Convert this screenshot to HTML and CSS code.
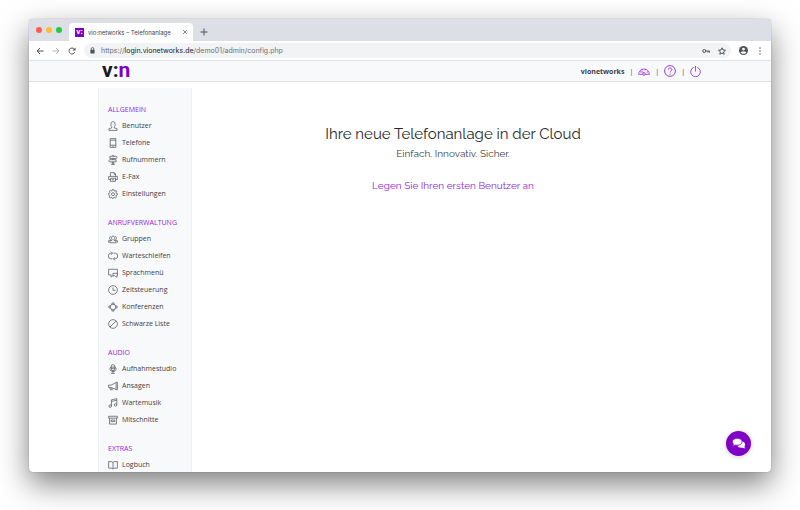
FILE: index.html
```html
<!DOCTYPE html>
<html lang="de">

<head>
    <meta charset="UTF-8">
    <meta name="viewport" content="width=device-width, initial-scale=1.0">
    <title>vio:networks – Telefonanlage</title>
    <link rel="stylesheet" href="styles.css">
</head>
<body>

    <div class="window">
        <div class="tabbar">
            <div class="lights">
                <span class="light red"></span>
                <span class="light yellow"></span>
                <span class="light green"></span>
            </div>
            <div class="tab">
                <span class="favicon">v:</span>
                <span class="tab-title">vio:networks – Telefonanlage</span>
                <button class="icon-btn" aria-label="Tab schließen">
                    <svg class="icon-small" viewBox="0 0 16 16"><path d="M3 3l10 10M13 3L3 13" /></svg>
                </button>
            </div>
            <button class="icon-btn new-tab" aria-label="Neuer Tab">
                <svg class="icon-mid" viewBox="0 0 16 16"><path d="M8 1v14M1 8h14" /></svg>
            </button>
        </div>

        <div class="toolbar">
            <button class="icon-btn" aria-label="Zurück">
                <svg class="icon-mid" viewBox="0 0 16 16"><path d="M15 8H2M8 2L2 8l6 6" /></svg>
            </button>
            <button class="icon-btn light-btn" aria-label="Vor">
                <svg class="icon-mid" viewBox="0 0 16 16"><path d="M1 8h13M8 2l6 6-6 6" /></svg>
            </button>
            <button class="icon-btn" aria-label="Neu laden">
                <svg class="icon-mid" viewBox="0 0 16 16"><path d="M13.500 10.500A6 6 0 1 1 12.500 4L14 6" /><path class="solid" d="M15 1v6H9z" /></svg>
            </button>
            <div class="address">
                <svg class="icon-lock" viewBox="0 0 12 16"><path class="solid" d="M1 6h10v9H1z" /><path d="M3 7V4a3 3 0 0 1 6 0v3" /></svg>
                <span class="url">https://<b>login.vionetworks.de</b>/demo01/admin/config.php</span>
                <button class="icon-btn" aria-label="Passwort">
                    <svg class="icon-mid" viewBox="0 0 16 16"><circle cx="4.500" cy="8" r="3" /><path d="M7 8h8v3M12 8v3" /></svg>
                </button>
                <button class="icon-btn" aria-label="Lesezeichen">
                    <svg class="icon-mid" viewBox="0 0 16 16"><path d="M8 1.500l2 4.500 5 .5-3.800 3.200L12.300 14.500 8 12l-4.300 2.500 1.100-4.800L1 6.500 6 6z" /></svg>
                </button>
            </div>
            <button class="icon-btn" aria-label="Profil">
                <svg class="icon-user" viewBox="0 0 16 16"><circle class="solid" cx="8" cy="8" r="8" /><circle class="cut" cx="8" cy="5.500" r="2.500" /><path class="cut" d="M3 11.500c1-2.500 9-2.500 10 0-2 3-8 3-10 0z" /></svg>
            </button>
            <button class="icon-btn" aria-label="Menü">
                <svg class="icon-mid" viewBox="0 0 16 16"><circle class="solid" cx="8" cy="2" r="1.500" /><circle class="solid" cx="8" cy="8" r="1.500" /><circle class="solid" cx="8" cy="14" r="1.500" /></svg>
            </button>
        </div>

        <header class="header">
            <a href="#" class="logo">v:<span>n</span></a>
            <nav class="user-nav">
                <b>vionetworks</b>
                <span class="sep">|</span>
                <a href="#" aria-label="Dashboard"><svg class="icon-head" viewBox="0 0 18 16"><path d="M1 13a8 8 0 0 1 16 0h-5.500M6.500 13H1M3 9l2 1M6 5l1 2M12 5l-1 2M15 9l-2 1M5 8l3.500 3" /><circle cx="9" cy="12.500" r="2" /></svg></a>
                <span class="sep">|</span>
                <a href="#" aria-label="Hilfe"><svg class="icon-head" viewBox="0 0 16 16"><circle cx="8" cy="8" r="7.200" /><path d="M5.700 6.200c0-3 4.700-3 4.700 0C10.400 8 8 8 8 10M8 11.500V13" /></svg></a>
                <span class="sep">|</span>
                <a href="#" aria-label="Abmelden"><svg class="icon-power" viewBox="0 0 16 16"><path d="M5.500 2a7 7 0 1 0 5 0M8 0v8" /></svg></a>
            </nav>
        </header>

        <div class="page">
            <nav class="sidebar">
                <h2>Allgemein</h2>
                <ul>
                    <li><a href="#"><svg class="icon" viewBox="0 0 16 16"><path d="M6 9.500C4 8 4 1 8 1s4 7 2 8.500V11l4.500 1.500V15h-13v-2.500L6 11z" /></svg>Benutzer</a></li>
                    <li><a href="#"><svg class="icon" viewBox="0 0 16 16"><path d="M3.500 1h9v14h-9zM3.500 3.500h9M3.500 11.500h9M7 13.300h2" /></svg>Telefone</a></li>
                    <li><a href="#"><svg class="icon" viewBox="0 0 16 16"><path d="M3 2h10l2 1.700-2 1.800H3zM13 7.500H3L1 9.200 3 11h10zM7 5.500v2M9 5.500v2M7 11v4M9 11v4M5 15h6M7 2V1h2v1" /></svg>Rufnummern</a></li>
                    <li><a href="#"><svg class="icon" viewBox="0 0 16 16"><path d="M4 7V1h6l2 2v4M4 12H1V7h14v5h-3M4 10h8v5H4zM6 12.500h4M10 1v2.500h2M12 8.500h1" /></svg>E-Fax</a></li>
                    <li><a href="#"><svg class="icon" viewBox="0 0 16 16"><path d="M6.700 1h2.600l.5 2 1.400.6L13 2.500 14 4.600 12.700 6l.5 1.200 1.800.3v2l-2 .5-.6 1.200 1.100 1.800-1.800 1.300-1.800-1-1 .4-.6 1.800H7l-.6-1.800-1.200-.4-1.900 1-1.500-1.500 1.100-1.800L2.400 10l-1.800-.7V7.200l1.900-.4L3 5.600 2 3.800l1.700-1.400 1.700 1L6.300 3z" /><circle cx="8" cy="8.300" r="2.400" /></svg>Einstellungen</a></li>
                </ul>
                <h2>Anrufverwaltung</h2>
                <ul>
                    <li><a href="#"><svg class="icon" viewBox="0 0 16 16"><path d="M6.500 9C5 7 5.500 3 8 3s3 4 1.500 6v1l3.500 1.500V14H3v-2.500L6.500 10zM4.500 10C3 10 1 10.500.5 11v2H2M4.500 4C2 4 2 7 3.500 8.500V10M11.500 10c1.500 0 3.500.5 4 1v2H14M11.500 4C14 4 14 7 12.500 8.500V10" /></svg>Gruppen</a></li>
                    <li><a href="#"><svg class="icon" viewBox="0 0 16 16"><path d="M6.500 3.500H4.500a4 4.500 0 0 0 0 9H7M9.500 12.500h2a4 4.500 0 0 0 0-9H9M5 1l2.500 2.500L5 6M11 10l-2.500 2.500L11 15" /></svg>Warteschleifen</a></li>
                    <li><a href="#"><svg class="icon" viewBox="0 0 16 16"><path d="M5 11H1V2h14v8M5 11v3.500L8 12M8 8.500h7v4h-1V15l-3-2.500H8z" /></svg>Sprachmenü</a></li>
                    <li><a href="#"><svg class="icon" viewBox="0 0 16 16"><circle cx="8" cy="8" r="7" /><path d="M8 4v4.500h4" /></svg>Zeitsteuerung</a></li>
                    <li><a href="#"><svg class="icon" viewBox="0 0 16 16"><circle cx="8" cy="8" r="4.500" /><path d="M6 4l.5-2.500h3L10 4M6 12l.5 2.500h3L10 12M4 6l-2.500.5v3L4 10M12 6l2.500.5v3L12 10" /></svg>Konferenzen</a></li>
                    <li><a href="#"><svg class="icon" viewBox="0 0 16 16"><circle cx="8" cy="8" r="7" /><path d="M13 3L3 13" /></svg>Schwarze Liste</a></li>
                </ul>
                <h2>Audio</h2>
                <ul>
                    <li><a href="#"><svg class="icon" viewBox="0 0 16 16"><path d="M5 4a3 3 0 0 1 6 0v4a3 3 0 0 1-6 0zM5 5h6M5 7h6M5 5C2 6 2 12 8 12s6-6 3-7M8 9v6M5 15h6" /></svg>Aufnahmestudio</a></li>
                    <li><a href="#"><svg class="icon" viewBox="0 0 16 16"><path d="M1 6.500h4l8-4v11l-8-3H1zM13 2h2v12h-2M3 10.500L4 14h3l-1-3" /></svg>Ansagen</a></li>
                    <li><a href="#"><svg class="icon" viewBox="0 0 16 16"><path d="M5.500 13V3L14 1v10M5.500 5.500L14 3.500" /><circle cx="3.500" cy="13" r="2" /><circle cx="12" cy="11" r="2" /></svg>Wartemusik</a></li>
                    <li><a href="#"><svg class="icon" viewBox="0 0 16 16"><path d="M1 2h14v3H1zM2.500 5v9.500h11V5M5 8h6v2.500H5z" /></svg>Mitschnitte</a></li>
                </ul>
                <h2>Extras</h2>
                <ul>
                    <li><a href="#"><svg class="icon" viewBox="0 0 16 16"><path d="M8 4C6 2 4 2.500 1 2.500V13c3 0 5-.5 7 1.500 2-2 4-1.500 7-1.500V2.500C12 2.500 10 2 8 4zM8 4v10" /></svg>Logbuch</a></li>
                </ul>
            </nav>

            <main class="content">
                <h1>Ihre neue Telefonanlage in der Cloud</h1>
                <p>Einfach. Innovativ. Sicher.</p>
                <a href="#" class="first-user">Legen Sie Ihren ersten Benutzer an</a>
            </main>
        </div>

        <button class="chat" aria-label="Chat">
            <svg viewBox="0 0 20 16"><path d="M14 5c3 0 5 2 5 4.500 0 1.200-.5 2.200-1.200 3 .2 1 .7 1.700 1.200 2.500-1.500 0-2.700-.5-3.500-1-4 .8-7-.5-8-3C12 11 14.500 8 14 5z" /><path class="front" d="M7.500.5c4 0 7 2.200 7 5s-3 5-7 5c-1 0-2-.1-2.800-.4C3.500 11 2 11.500.5 11.500c.7-.8 1.200-1.600 1.400-2.500C1 8 .5 6.800.5 5.500c0-2.800 3-5 7-5z" /></svg>
        </button>
    </div>

</body>

</html>
```
FILE: styles.css
```css
* {
    box-sizing: border-box;
}

body {
    margin: 0;
    height: 100vh;
    padding: 19px 29px 38px;
    background-color: #fff;
    font-family: "Open Sans", sans-serif;
    font-size: 7px;
    color: #3c3f45;
    overflow: hidden;
}

h1, h2, p, ul {
    margin: 0;
    padding: 0;
    font-weight: normal;
}

ul {
    list-style: none;
}

a {
    color: inherit;
    text-decoration: none;
}

svg {
    display: block;
    fill: none;
    stroke: currentColor;
    stroke-width: 1.2;
}

.solid {
    fill: currentColor;
    stroke: none;
}

.cut {
    fill: #fff;
    stroke: none;
}

.window {
    position: relative;
    display: flex;
    flex-direction: column;
    height: 100%;
    border-radius: 4px;
    background-color: #fff;
    box-shadow: 0 0 1px rgba(0, 0, 0, 0.5), 0 12px 30px rgba(0, 0, 0, 0.5);
    overflow: hidden;
}

/* browser */
.tabbar {
    flex: none;
    display: flex;
    align-items: flex-end;
    height: 22px;
    padding-left: 7px;
    background-color: #dcdfe6;
}

.lights {
    display: flex;
    gap: 4px;
    margin: 0 7px 8px 0;
}

.light {
    width: 6px;
    height: 6px;
    border-radius: 50%;
}

.red {
    background-color: #ff5b52;
}

.yellow {
    background-color: #febc2e;
}

.green {
    background-color: #25c940;
}

.tab {
    display: flex;
    align-items: center;
    width: 124px;
    height: 18px;
    padding: 0 5px 0 6px;
    border-radius: 4px 4px 0 0;
    background-color: #fff;
    font-family: Inter, sans-serif;
    font-size: 6px;
}

.favicon {
    width: 9px;
    height: 9px;
    margin-right: 4px;
    background-color: #8000c8;
    color: #fff;
    font-weight: bold;
    font-size: 7px;
    line-height: 8px;
    text-align: center;
}

.tab-title {
    flex: 1;
    white-space: nowrap;
}

.icon-btn {
    padding: 0;
    border: 0;
    background: none;
    color: #505357;
    cursor: pointer;
}

.icon-btn svg {
    stroke-width: 2;
}

.light-btn {
    color: #b4b6b9;
}

.new-tab {
    margin: 0 0 5px 7px;
}

.icon-small {
    width: 6px;
    height: 6px;
}

.icon-mid {
    width: 8px;
    height: 8px;
}

.icon-user {
    width: 9px;
    height: 9px;
}

.icon-lock {
    width: 5px;
    height: 7px;
    stroke-width: 2;
    color: #505357;
}

.toolbar {
    flex: none;
    display: flex;
    align-items: center;
    gap: 8px;
    height: 19px;
    padding: 0 7px;
}

.address {
    flex: 1;
    display: flex;
    align-items: center;
    gap: 8px;
    height: 15px;
    padding: 0 5px 0 6px;
    border-radius: 8px;
    background-color: #f1f3f5;
    font-family: Inter, sans-serif;
    color: #6d7074;
}

.url {
    flex: 1;
    margin-left: -2px;
}

.url b {
    font-weight: normal;
    color: #17191c;
}

/* header */
.header {
    flex: none;
    display: flex;
    align-items: center;
    justify-content: space-between;
    height: 22px;
    padding: 0 70px 0 73px;
    border-top: 1px solid #dfe0e2;
    border-bottom: 1px solid #dfe0e2;
    background-color: #f8f9fb;
}

.logo {
    padding-bottom: 2px;
    font-family: Roboto, sans-serif;
    font-size: 21px;
    font-weight: bold;
    line-height: 16px;
    color: #17191c;
}

.logo span {
    color: #8000c8;
}

.user-nav {
    display: flex;
    align-items: center;
    gap: 5px;
}

.user-nav a {
    color: #9326d3;
}

.icon-head {
    width: 12px;
    height: 12px;
}

.icon-power {
    width: 11px;
    height: 11px;
}

/* page */
.page {
    flex: 1;
    display: flex;
    min-height: 0;
    margin: 0 57px 0 69px;
    padding-top: 6px;
}

.sidebar {
    width: 94px;
    padding: 14px 9px 0;
    border: solid #eeeff2;
    border-width: 0 1px;
    background-color: #f8f9fb;
    overflow: hidden;
}

.sidebar h2 {
    font-size: 7px;
    line-height: 15px;
    text-transform: uppercase;
    color: #9326d3;
}

.sidebar ul {
    margin-bottom: 13px;
}

.sidebar a {
    display: flex;
    align-items: center;
    gap: 4px;
    line-height: 17px;
}

.icon {
    width: 10px;
    height: 10px;
    color: #55585d;
}

.content {
    flex: 1;
    padding-top: 34px;
    font-family: Raleway, sans-serif;
    font-size: 10px;
    line-height: 16px;
    text-align: center;
}

.content h1 {
    font-size: 15px;
    line-height: 24px;
    color: #26282b;
}

.content p {
    margin-bottom: 16px;
}

.first-user {
    color: #9326d3;
}

.chat {
    position: absolute;
    right: 20px;
    bottom: 16px;
    display: flex;
    align-items: center;
    justify-content: center;
    width: 25px;
    height: 25px;
    padding: 0;
    border: 0;
    border-radius: 50%;
    background-color: #8000c8;
    box-shadow: 0 1px 5px rgba(0, 0, 0, 0.2);
    cursor: pointer;
}

.chat svg {
    width: 14px;
    height: 11px;
    fill: #fff;
    stroke: none;
}

.chat .front {
    stroke: #8000c8;
    stroke-width: 1;
}
```
